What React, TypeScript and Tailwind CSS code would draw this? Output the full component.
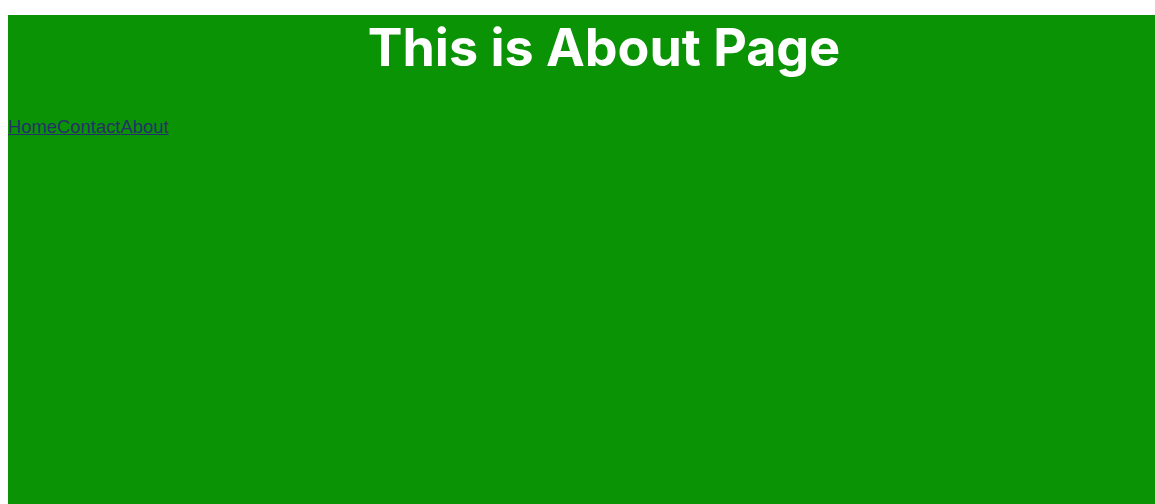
export default function App() {
  return (
    <div className="flex h-screen w-full flex-col overflow-hidden bg-white pl-2 pt-[15px]">
      <div className="flex flex-1 flex-col bg-[#0a9304]">
        <h1 className="pl-[45px] pt-[3px] text-center font-['Inter',sans-serif] text-[52px] font-bold leading-[60px] text-white">
          This is About Page
        </h1>
        <nav className="mt-[39px] flex font-['Liberation_Sans',Arial,sans-serif] text-[18.4px] leading-5 text-[#27306a]">
          <a href="#" className="underline">Home</a>
          <a href="#" className="underline">Contact</a>
          <a href="#" className="underline">About</a>
        </nav>
      </div>
    </div>
  );
}
